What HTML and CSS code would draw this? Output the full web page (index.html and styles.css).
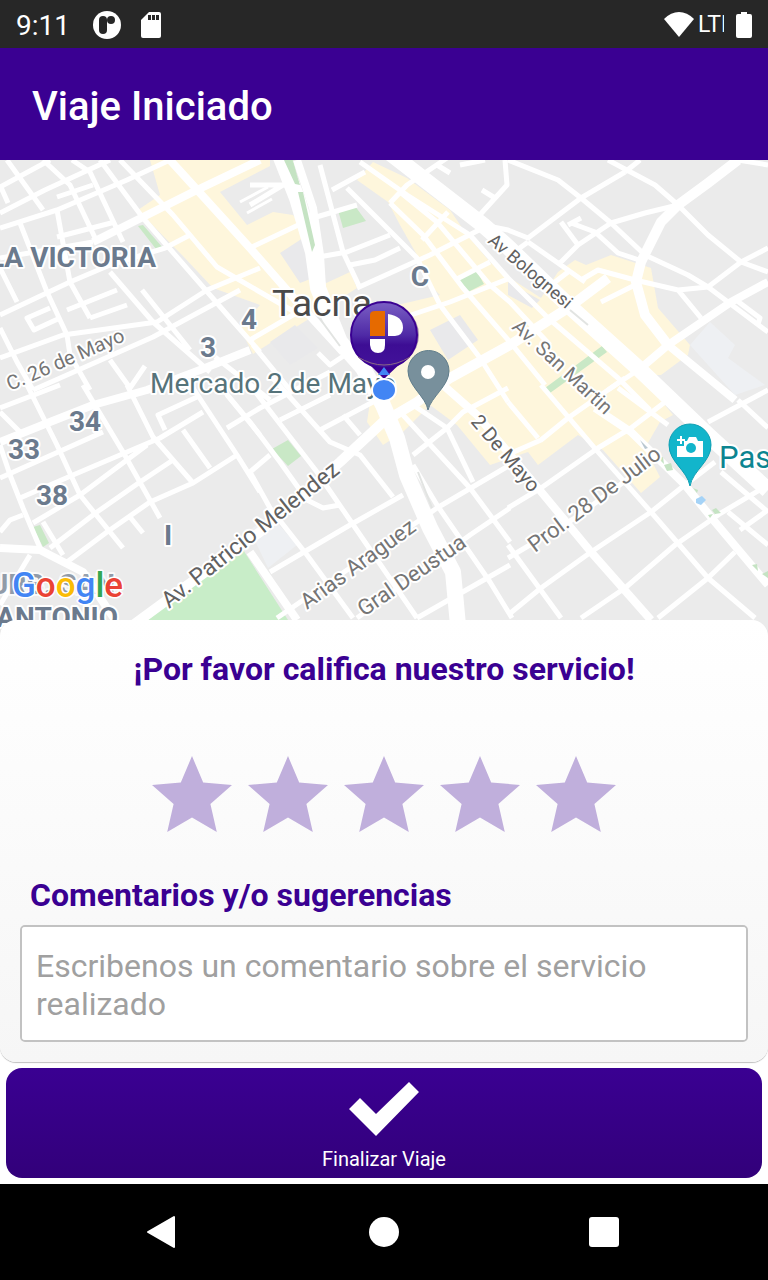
FILE: index.html
```html
<!DOCTYPE html>
<html lang="es">
<head>
    <meta charset="UTF-8">
    <meta name="viewport" content="width=device-width, initial-scale=1.0">
    <title>Viaje Iniciado</title>
    <link rel="stylesheet" href="styles.css">
</head>
<body>
    <div class="status-bar">
        <span class="clock">9:11</span>
        <svg class="status-app" width="28" height="28" viewBox="0 0 28 28">
            <circle cx="14" cy="14" r="14" fill="#fff"/>
            <rect x="6" y="5" width="8" height="18" rx="4" fill="#272727"/>
            <circle cx="18" cy="9" r="4" fill="#272727"/>
        </svg>
        <svg width="20" height="26" viewBox="0 0 20 26">
            <path d="M8 0h10a2 2 0 0 1 2 2v22a2 2 0 0 1-2 2H2a2 2 0 0 1-2-2V8z" fill="#fff"/>
            <path d="M7 3h3v5H7zM11 3h3v5h-3zM15 3h3v5h-3z" fill="#272727"/>
        </svg>
        <div class="status-right">
            <svg width="30" height="26" viewBox="0 0 30 26"><path d="M15 25L0 7Q7 0 15 0t15 7z" fill="#fff"/></svg>
            <span class="network">LTE</span>
            <svg width="16" height="26" viewBox="0 0 16 26"><path d="M5 0h6v2h3a2 2 0 0 1 2 2v20a2 2 0 0 1-2 2H2a2 2 0 0 1-2-2V4a2 2 0 0 1 2-2h3z" fill="#fff"/></svg>
        </div>
    </div>

    <header class="app-bar">
        <h1>Viaje Iniciado</h1>
    </header>

    <main>
        <div class="map">
            <svg viewBox="0 160 768 476" preserveAspectRatio="xMidYMid slice">
                <defs>
                    <linearGradient id="pinFill" x1="0" y1="0" x2="0" y2="1">
                        <stop offset="0" stop-color="#7a5fc4"/>
                        <stop offset="0.5" stop-color="#4f2aa6"/>
                        <stop offset="0.65" stop-color="#3d0d94"/>
                        <stop offset="1" stop-color="#43129a"/>
                    </linearGradient>
                </defs>
                <rect y="160" width="768" height="476" fill="#ebebeb"/>

                <!-- commercial zones -->
                <g fill="#fef6dc">
                    <path d="M150 160L270 160L270 166L220 192L247 225L273 212L293 215L307 232L313 258L322 285L350 272L357 288L320 312L253 354L240 328L260 305L213 288L182 255L170 243L138 210L160 195Z"/>
                    <path d="M373 162L357 180L388 202L400 225L417 255L430 285L440 295L393 306L370 402L367 422L383 445L403 432L430 405L457 425L490 465L528 452L538 465L578 435L603 450L641 493L660 477L645 448L660 422L673 415L640 375L661 375L688 355L690 345L658 308L651 268L611 255L586 265L575 260L558 272L541 298L510 278L490 262L467 235L450 210L407 178Z"/>
                </g>
                <g fill="#e9e9eb">
                    <path d="M280 253L303 238L315 258L313 278L300 283ZM270 342L295 325L318 348L290 365ZM430 330L460 315L478 340L448 360ZM508 282L540 300L532 308L508 295Z"/>
                </g>
                <path d="M250 530L270 515L297 545L268 568ZM690 345L710 322L735 345L728 358L765 385L735 395Z" fill="#eef0f3"/>

                <!-- parks -->
                <g fill="#c9e8c6">
                    <path d="M138 226L143 225L163 248L156 249ZM280 160L293 160L300 188L316 252L312 258L297 205ZM338 210L355 206L366 221L343 228ZM457 280L476 270L484 284L468 292Z"/>
                    <path d="M545 388L602 346L607 352L550 393ZM272 449L288 440L301 456L288 466ZM33 527L40 525L49 543L43 547Z"/>
                </g>
                <path d="M240 545L288 620L148 620Z" fill="#c8edc8"/>

                <!-- minor streets -->
                <g class="street">
                    <path d="M0 228L57 210L127 180L170 160M0 213L45 190L110 160M0 187L50 160M0 258L93 242M0 315L70 282L110 265L165 248L190 235"/>
                    <path d="M0 358L63 335L157 322L207 290L260 268M250 248L313 218L357 205M33 390L153 337L240 290M57 197L93 185M57 237L115 222"/>
                    <path d="M7 160L43 210M0 185L8 203M43 160L70 185L97 242M72 160L90 172L123 242M100 160L143 218L230 318L260 352M120 160L173 215L217 267L260 292L300 315"/>
                    <path d="M20 223L47 292L67 335L70 355L90 390M57 210L70 282L90 318M0 268L17 302M110 272L153 322L210 372M0 328L17 362L33 390M50 308L27 318L34 330L60 318M67 310L117 290M90 318L127 305M110 360L130 388L145 366M142 290L190 350"/>
                    <path d="M240 202L268 187M247 213L272 199" stroke-width="3"/>
                    <path d="M0 408L60 385M0 478L103 432M20 498L73 475L160 438L203 412M0 532L10 520L23 515M33 523L80 495L147 445M50 548L97 512L140 482L173 460M67 562L107 532L150 502L193 483L237 455"/>
                    <path d="M27 385L57 445L80 495L123 548M0 412L20 432M0 445L10 475L23 508L40 548M83 385L123 452L160 518M127 385L153 437L193 483M165 430L158 415L197 397M183 430L210 468M193 388L237 455L260 492M227 395L260 435M227 428L260 408L330 372M30 555L0 605M43 522L63 555M130 517L143 533"/>
                    <path d="M225 392L250 422L280 462L307 500L323 508L340 505M250 385L317 472L367 545L417 618M270 375L297 405L330 442L360 455L393 497M343 415L360 435M215 357L270 400M250 472L270 455M250 472L270 508L307 555L353 618"/>
                    <path d="M280 420L330 395M320 430L373 402M270 572L350 525L403 495M277 618L420 520L437 508L510 465M357 618L470 535L510 508M417 618L510 565M413 455L447 428L463 412L508 388M403 415L470 488L510 542M413 405L447 428L473 482M413 465L437 505L490 582L512 618"/>
                    <path d="M508 508L541 488L598 448L631 428L665 402M500 458L541 440L568 418L625 378M508 558L575 518L640 470M508 615L541 588L591 552L651 512L681 488L715 462M581 618L625 588L675 545L721 513L768 485M658 618L708 578L735 552"/>
                    <path d="M508 402L538 438M541 385L598 452L651 512L708 578L755 618M508 545L561 618M618 388L668 425M721 472L748 495L768 512M728 512L768 545M740 530L768 510M708 422L768 390M738 400L768 428"/>
                    <path d="M508 160L558 180L581 198L611 223L645 255L688 275L708 287L768 332M625 172L581 198L528 238L508 230L483 225M608 160L655 185L678 205L708 235L741 262L768 272M625 172L640 160M738 160L768 165M678 205L645 213L611 223L578 245L558 265M561 222L578 245M568 225L581 218M571 223L595 232L618 253L645 262M528 242L585 282M528 242L510 255"/>
                    <path d="M581 280L598 270L635 280L678 290L708 287L741 262L768 248M601 302L635 285M678 290L701 318M736 300L760 318L758 324M608 390L641 368M555 282L568 272"/>
                    <path d="M360 162L407 195L470 235L508 278L548 318L618 378L650 410M390 203L423 235L463 288L510 342L545 385M347 188L417 258L440 305L480 358L508 402M400 192L437 222L490 285L510 302L550 345"/>
                    <path d="M357 288L430 255L483 228M390 322L450 302L510 278M455 280L490 262M422 240L448 212M390 203L407 185L447 158M320 165L343 252L360 288M332 190L365 172M313 258L347 252L390 235M350 265L375 260L400 248M250 185L300 185M250 205L283 185"/>
                    <path d="M477 218L507 185L505 160M482 190L495 198M437 165L450 173M460 165L485 160M250 340L310 305M253 345L290 390M318 353L330 365L345 355"/>
                </g>

                <!-- avenues -->
                <g class="avenue">
                    <path d="M93 242L133 222L197 190L260 160M170 160L250 248L300 305L343 352M0 442L50 422L93 405L147 390L200 370L250 350"/>
                    <path d="M0 548L40 550L83 572L115 620M250 552L297 620M443 385L477 415L538 488L591 552L651 620M595 408L631 432L685 485L715 522L768 585"/>
                    <path d="M641 368L668 345L731 302L768 282M668 345L735 400M297 160L313 208L320 255L322 288L340 342"/>
                </g>
                <path class="avenue wide" d="M133 625L260 532L340 462L383 422L417 402L450 378L510 345L568 308L608 278M738 160L708 183L678 205L661 222L641 262L636 282L645 315L668 345"/>
                <path class="avenue main" d="M280 155L297 198L313 252L318 288L340 342L363 368L383 405L397 438L407 475L430 528L453 572L458 625"/>
                <path class="avenue main" d="M390 153L483 225L508 247L568 305L638 368L708 435L768 490"/>
                <path d="M315 312L340 346M418 472L432 508M570 310L588 325" stroke="#e2e4e2" stroke-width="2"/>

                <!-- promenade gardens along the boulevard -->
                <g fill="#c5e3c3">
                    <path d="M284 160L292 160L300 185L295 184ZM298 192L303 192L315 245L312 252L305 222Z"/>
                    <path d="M658 458L663 457L664 464ZM664 465L671 463L673 470L667 471ZM693 488L698 490L697 493ZM712 510L716 508L721 513L715 514ZM708 515L713 514L710 518ZM752 565L757 564L758 571ZM762 574L768 571L768 578Z"/>
                </g>
                <path d="M640 440L648 448L645 449Z" fill="#b9c7d0"/>
                <path d="M696 499l6-3 4 4-5 5-5-2z" fill="#a5d3f7"/>

                <!-- districts and places -->
                <g class="district">
                    <text x="156" y="267" text-anchor="end">LA VICTORIA</text>
                    <text x="208" y="357" text-anchor="middle">3</text>
                    <text x="249" y="329" text-anchor="middle">4</text>
                    <text x="420" y="286" text-anchor="middle">C</text>
                    <text x="85" y="431" text-anchor="middle">34</text>
                    <text x="24" y="459" text-anchor="middle">33</text>
                    <text x="52" y="505" text-anchor="middle">38</text>
                    <text x="168" y="545" text-anchor="middle">I</text>
                    <text x="115" y="594" text-anchor="end" opacity="0.7">URB. SAN</text>
                    <text x="118" y="627" text-anchor="end">ANTONIO</text>
                </g>
                <text class="city" x="272" y="316">Tacna</text>
                <text class="place" x="150" y="393">Mercado 2 de Mayo</text>
                <text class="place paseo" x="719" y="468">Paseo</text>

                <!-- street names -->
                <g class="road-name">
                    <text class="small" transform="translate(10 391) rotate(-23.5)">C. 26 de Mayo</text>
                    <text class="tiny dark" transform="translate(487 242) rotate(40.5)">Av Bolognesi</text>
                    <text class="small" transform="translate(511 328) rotate(43)">Av. San Martin</text>
                    <text class="small dark" transform="translate(470 422) rotate(49.5)">2 De Mayo</text>
                    <text class="big dark" transform="translate(169 609) rotate(-38.5)">Av. Patricio Melendez</text>
                    <text transform="translate(307 610) rotate(-36)">Arias Araguez</text>
                    <text transform="translate(364 617) rotate(-34.5)">Gral Deustua</text>
                    <text transform="translate(535 553) rotate(-37)">Prol. 28 De Julio</text>
                </g>

                <!-- museum pin -->
                <path d="M428 410C426 397 408 386 408 371a20 20 0 0 1 41 0C449 386 431 397 428 410Z" fill="#78909c" stroke="#607d8b"/>
                <circle cx="428" cy="372" r="7" fill="#fff"/>

                <!-- paseo pin -->
                <path d="M690 486C687 470 669 462 669 445a21 21 0 0 1 42 0C711 462 693 470 690 486Z" fill="#12b5cb" stroke="#0e9fb3"/>
                <path d="M677 446h7v-5h3l2-4h7l2 4h5v16h-26z" fill="#fff"/>
                <circle cx="691" cy="448" r="5" fill="#12b5cb"/>
                <path d="M681 436v8M677 440h8" stroke="#fff" stroke-width="2"/>

                <!-- driver pin -->
                <path d="M362 357L384 379L407 357Z" fill="#3a0092"/>
                <ellipse cx="385" cy="335" rx="34" ry="32" fill="#2b0a66" opacity="0.4"/>
                <circle cx="384" cy="335" r="33" fill="url(#pinFill)" stroke="#3a0092" stroke-width="2"/>
                <path d="M358 357Q384 373 410 357" fill="none" stroke="#8b6a86"/>
                <path d="M370 336v-21q0-4 5-4h10v25z" fill="#e66a00"/>
                <path d="M388 314q15 2 15 14 0 7-8 8h-7z" fill="#fff"/>
                <path d="M370 339h15v6q0 8-7 8t-8-8z" fill="#fff"/>
                <ellipse cx="384" cy="390" rx="13" ry="12" fill="#fff"/>
                <ellipse cx="384" cy="390" rx="11" ry="10" fill="#4285f4"/>
                <path d="M384 367L390 375H378Z" fill="#4285f4"/>

                <text class="google" x="12" y="597"><tspan fill="#4285f4">G</tspan><tspan fill="#ea4335">o</tspan><tspan fill="#fbbc05">o</tspan><tspan fill="#4285f4">g</tspan><tspan fill="#34a853">l</tspan><tspan fill="#ea4335">e</tspan></text>
            </svg>
        </div>

        <form class="trip-form">
            <section class="card">
                <fieldset class="rating">
                    <legend>¡Por favor califica nuestro servicio!</legend>
                    <div class="stars">
                        <input type="radio" name="rating" value="1" aria-label="1 estrella">
                        <input type="radio" name="rating" value="2" aria-label="2 estrellas">
                        <input type="radio" name="rating" value="3" aria-label="3 estrellas">
                        <input type="radio" name="rating" value="4" aria-label="4 estrellas">
                        <input type="radio" name="rating" value="5" aria-label="5 estrellas">
                    </div>
                </fieldset>
                <label for="comment">Comentarios y/o sugerencias</label>
                <textarea id="comment" name="comment" rows="2" placeholder="Escribenos un comentario sobre el servicio realizado"></textarea>
            </section>
            <button type="button" class="finish">
                <svg width="72" height="56" viewBox="0 0 72 56"><path d="M1 28L12 17L28 33L61 1L71 11L28 55Z" fill="#fff"/></svg>
                <span>Finalizar Viaje</span>
            </button>
        </form>
    </main>

    <nav class="nav-bar">
        <button type="button" aria-label="Atrás">
            <svg width="48" height="48" viewBox="0 0 48 48"><path d="M8 24L34 9V39Z" fill="#fff" stroke="#fff" stroke-width="2" stroke-linejoin="round"/></svg>
        </button>
        <button type="button" aria-label="Inicio">
            <svg width="48" height="48" viewBox="0 0 48 48"><circle cx="24" cy="24" r="15" fill="#fff"/></svg>
        </button>
        <button type="button" aria-label="Recientes">
            <svg width="48" height="48" viewBox="0 0 48 48"><rect x="9" y="9" width="30" height="30" rx="3" fill="#fff"/></svg>
        </button>
    </nav>
</body>
</html>
```
FILE: styles.css
```css
* {
    box-sizing: border-box;
}
body {
    font-family: Roboto, "Noto Sans", sans-serif;
    background-color: #fff;
    margin: 0;
    min-height: 100vh;
    display: flex;
    flex-direction: column;
}
svg {
    display: block;
    flex: none;
}
button {
    font: inherit;
    border: none;
    cursor: pointer;
}

/* status bar */
.status-bar {
    display: flex;
    align-items: center;
    height: 48px;
    padding: 1px 16px 0;
    background-color: #272727;
    color: #fff;
}
.clock {
    padding-top: 2px;
    font-size: 28px;
    line-height: 32px;
}
.status-app {
    margin: 0 20px 0 23px;
}
.status-right {
    display: flex;
    align-items: center;
    margin-left: auto;
}
.network {
    width: 26px;
    margin: 0 12px 0 4px;
    overflow: hidden;
    font-size: 23px;
    line-height: 28px;
}

.app-bar {
    display: flex;
    align-items: center;
    height: 112px;
    padding: 6px 32px 0;
    background-color: #3a0092;
    color: #fff;
}
.app-bar h1 {
    margin: 0;
    font-size: 40px;
    font-weight: 500;
    line-height: 48px;
}

main {
    flex: 1;
    display: flex;
    flex-direction: column;
}

/* map, runs under the rounded top of the card */
.map {
    flex: 1 0 476px;
    height: 476px;
    margin-bottom: -16px;
    overflow: hidden;
    background-color: #ebebeb;
}
.map svg {
    width: 100%;
    height: 100%;
}
.street {
    fill: none;
    stroke: #fff;
    stroke-width: 5;
    stroke-linejoin: round;
}
.avenue {
    fill: none;
    stroke: #fff;
    stroke-width: 8;
    stroke-linejoin: round;
}
.wide {
    stroke-width: 10;
}
.main {
    stroke-width: 16;
}
.map text {
    stroke: #fff;
    stroke-width: 4px;
    stroke-linejoin: round;
    paint-order: stroke;
}
.district {
    font-size: 28px;
    font-weight: 700;
    fill: #6b7a8d;
}
.city {
    font-size: 37px;
    fill: #4a4a4a;
}
.place {
    font-size: 28px;
    fill: #56737a;
}
.paseo {
    font-size: 31px;
    fill: #0c8591;
}
.road-name {
    font-size: 22px;
    fill: #757575;
}
.road-name .tiny {
    font-size: 18px;
}
.road-name .small {
    font-size: 20px;
}
.road-name .big {
    font-size: 23px;
}
.road-name .dark {
    fill: #616161;
}
.map .google {
    font-size: 35px;
    font-weight: 500;
    stroke-width: 3px;
}

/* rating card */
.trip-form {
    position: relative;
    display: flex;
    flex-direction: column;
    padding-bottom: 6px;
}
.card {
    display: flex;
    flex-direction: column;
    padding: 30px 20px 20px;
    border-radius: 16px;
    background: linear-gradient(#fff, #f6f6f6);
    box-shadow: 0 1px 1px rgba(0, 0, 0, 0.25);
}
.rating {
    min-width: 0;
    margin: 0;
    padding: 0;
    border: none;
}
.rating legend, .card label {
    color: #3a0092;
    font-size: 32px;
    font-weight: 700;
    line-height: 38px;
}
.rating legend {
    width: 100%;
    padding: 0;
    text-align: center;
}
.stars {
    display: flex;
    justify-content: center;
    gap: 16px;
    padding: 68px 0 44px;
}
.stars input {
    appearance: none;
    width: 80px;
    height: 76px;
    margin: 0;
    background-color: #c0afdc;
    clip-path: polygon(50% 0, 64% 35%, 100% 38%, 73% 63%, 81% 100%, 50% 81%, 19% 100%, 27% 63%, 0 38%, 36% 35%);
    cursor: pointer;
}
.stars input:checked {
    background-color: #3a0092;
}
.card label {
    padding: 0 10px;
}
textarea {
    display: block;
    width: 100%;
    height: 117px;
    margin-top: 11px;
    padding: 20px 14px;
    border: 2px solid #c2c2c2;
    border-radius: 5px;
    background-color: #fff;
    font: inherit;
    font-size: 32px;
    line-height: 38px;
    resize: none;
}
textarea::placeholder {
    color: #a0a0a0;
}
.finish {
    display: flex;
    flex-direction: column;
    align-items: center;
    gap: 10px;
    margin: 6px 6px 0;
    padding: 13px 0 7px;
    border-radius: 16px;
    background: linear-gradient(#3a0092, #32007a);
    color: #fff;
    font-size: 20px;
    line-height: 24px;
}

/* system navigation */
.nav-bar {
    display: flex;
    align-items: center;
    justify-content: center;
    gap: 172px;
    height: 96px;
    background-color: #000;
}
.nav-bar button {
    padding: 0;
    background: none;
}
```
